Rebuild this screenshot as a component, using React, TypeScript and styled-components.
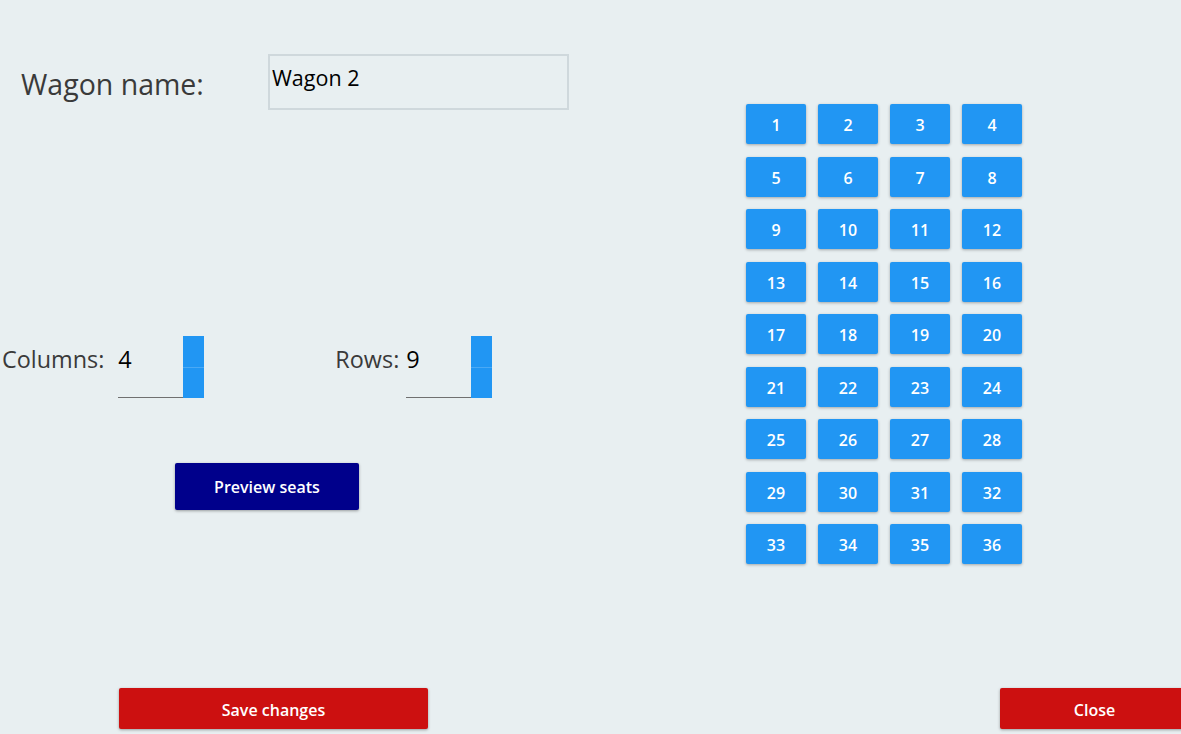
import React from 'react';
import styled, { createGlobalStyle } from 'styled-components';

const Global = createGlobalStyle`
  html, body { margin: 0; padding: 0; background: #e8eff1; }
  body { font-family: "Open Sans", "Noto Sans", sans-serif; }
  * { box-sizing: border-box; }
`;

const Page = styled.div`
  width: 1181px;
  height: 734px;
  overflow: hidden;
  display: flex;
  flex-direction: column;
  background: #e8eff1;
  color: #3a3a3a;
`;

const Main = styled.div`
  display: flex;
  flex: 1;
`;

const Form = styled.div`
  width: 746px;
  display: flex;
  flex-direction: column;
  padding-top: 54px;
`;

const NameRow = styled.div`
  display: flex;
  align-items: center;
`;

const NameLabel = styled.label`
  font-size: 28.5px;
  margin-left: 21px;
  width: 247px;
  padding-top: 4px;
  color: #3a3a3a;
`;

const NameInput = styled.input`
  width: 301px;
  height: 56px;
  border: 2px solid #cfd8dc;
  background: transparent;
  font-family: inherit;
  font-size: 21.5px;
  color: #000;
  padding: 0 2px 10px;
  outline: none;
`;

const SpinRow = styled.div`
  display: flex;
  margin-top: 226px;
  padding-left: 2px;
  gap: 131px;
`;

const Field = styled.div<{ $gap: number }>`
  display: flex;
  align-items: flex-start;
  gap: ${p => p.$gap}px;
`;

const FieldLabel = styled.span`
  font-size: 23.4px;
  line-height: 46px;
  color: #3a3a3a;
`;

const NumberBox = styled.div`
  display: flex;
  height: 62px;
`;

const NumberValue = styled.div`
  width: 65px;
  border-bottom: 1px solid #707070;
  font-size: 23.5px;
  line-height: 46px;
  color: #000;
`;

const Spinner = styled.div`
  width: 21px;
  display: flex;
  flex-direction: column;
`;

const SpinHalf = styled.div`
  flex: 1;
  background: #2196f3;
  & + & { border-top: 1px solid #4aa9f5; }
`;

const PreviewButton = styled.button`
  margin-top: 65px;
  margin-left: 175px;
  width: 184px;
  height: 47px;
  border: none;
  border-radius: 2px;
  background: #00008b;
  color: #fff;
  font-family: inherit;
  font-weight: 600;
  font-size: 16px;
  padding-top: 2px;
  box-shadow: 0 1px 3px rgba(0, 0, 0, 0.35);
`;

const SeatGrid = styled.div`
  padding-top: 104px;
  display: grid;
  grid-template-columns: repeat(4, 60px);
  grid-auto-rows: 40px;
  column-gap: 12px;
  row-gap: 12.5px;
  align-content: start;
`;

const Seat = styled.div`
  background: #2196f3;
  border-radius: 2px;
  color: #fff;
  font-weight: 600;
  font-size: 16px;
  padding-top: 2px;
  display: flex;
  align-items: center;
  justify-content: center;
  box-shadow: 0 1px 3px rgba(0, 0, 0, 0.3);
`;

const Footer = styled.div`
  display: flex;
  padding-left: 119px;
  padding-bottom: 5px;
`;

const RedButton = styled.button<{ $width: number }>`
  width: ${p => p.$width}px;
  height: 41px;
  border: none;
  border-radius: 2px;
  background: #cc1010;
  color: #fff;
  font-family: inherit;
  font-weight: 600;
  font-size: 16px;
  padding-top: 4px;
  box-shadow: 0 1px 3px rgba(0, 0, 0, 0.35);
  flex-shrink: 0;
`;

const Spacer = styled.div`
  flex: 1;
`;

const Edge = styled.div`
  margin-right: -8px;
  display: flex;
`;

export default function App() {
  const seats = Array.from({ length: 36 }, (_, i) => i + 1);
  return (
    <>
      <Global />
      <Page>
        <Main>
          <Form>
            <NameRow>
              <NameLabel>Wagon name:</NameLabel>
              <NameInput defaultValue="Wagon 2" />
            </NameRow>
            <SpinRow>
              <Field $gap={14}>
                <FieldLabel>Columns:</FieldLabel>
                <NumberBox>
                  <NumberValue>4</NumberValue>
                  <Spinner>
                    <SpinHalf />
                    <SpinHalf />
                  </Spinner>
                </NumberBox>
              </Field>
              <Field $gap={7}>
                <FieldLabel>Rows:</FieldLabel>
                <NumberBox>
                  <NumberValue>9</NumberValue>
                  <Spinner>
                    <SpinHalf />
                    <SpinHalf />
                  </Spinner>
                </NumberBox>
              </Field>
            </SpinRow>
            <PreviewButton>Preview seats</PreviewButton>
          </Form>
          <SeatGrid>
            {seats.map(n => (
              <Seat key={n}>{n}</Seat>
            ))}
          </SeatGrid>
        </Main>
        <Footer>
          <RedButton $width={309}>Save changes</RedButton>
          <Spacer />
          <Edge>
            <RedButton $width={189}>Close</RedButton>
          </Edge>
        </Footer>
      </Page>
    </>
  );
}
